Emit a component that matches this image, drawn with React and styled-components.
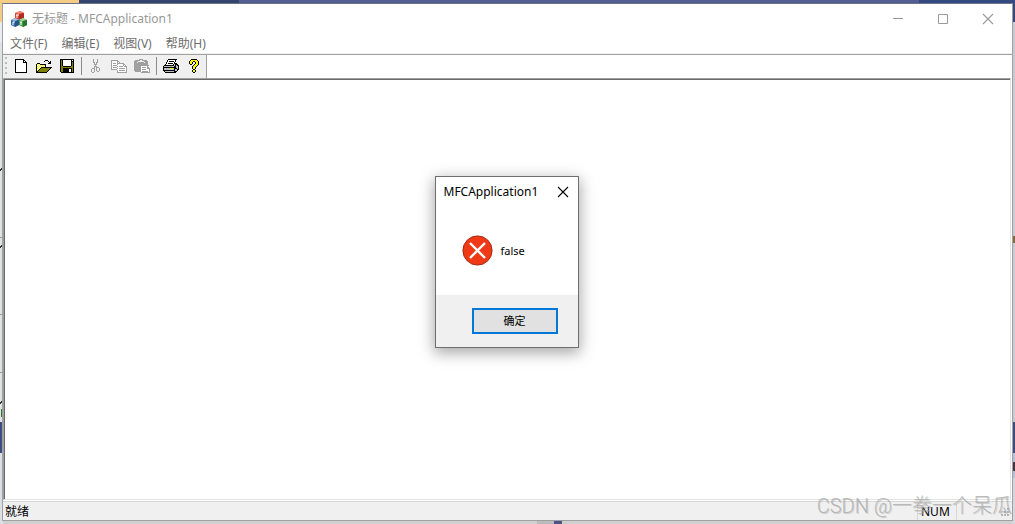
import React from 'react';
import styled, { createGlobalStyle } from 'styled-components';

const GlobalStyle = createGlobalStyle`
    * {
        box-sizing: border-box;
    }
    body {
        margin: 0;
        font-family: "Noto Sans", "Noto Sans CJK SC", sans-serif;
        font-size: 12px;
        line-height: 16px;
    }
    button {
        font: inherit;
        color: inherit;
        border: 0;
        padding: 0;
        background: none;
    }
`;

// strips of the other windows that show around the frame
const Desktop = styled.div`
    position: relative;
    display: flex;
    min-height: 100vh;
    padding: 3px 2px 3px 2px;
    background:
        linear-gradient(135deg, transparent 40%, #333 40%, #333 70%, transparent 70%) 0 167px / 3px 4px no-repeat,
        linear-gradient(135deg, transparent 40%, #333 40%, #333 70%, transparent 70%) 0 244px / 3px 4px no-repeat,
        linear-gradient(135deg, transparent 40%, #333 40%, #333 70%, transparent 70%) 0 400px / 3px 4px no-repeat,
        linear-gradient(#2f7a35, #2f7a35) 1px 409px / 2px 8px no-repeat,
        linear-gradient(#8a6a3a, #8a6a3a) 100% 236px / 2px 7px no-repeat,
        linear-gradient(#4a3340, #4a3340) 100% 462px / 2px 9px no-repeat,
        linear-gradient(#4c5587, #4c5587) 554px 100% / 8px 4px no-repeat,
        linear-gradient(#bcbcbc, #bcbcbc) 537px 100% / 17px 4px no-repeat,
        linear-gradient(90deg, #f5cc84 79px, #33456f 79px, #33456f 239px, #535f92 239px, #535f92 919px, #34497f 919px) 0 0 / 100% 4px no-repeat,
        linear-gradient(#f5cc84 22px, #e8ecf4 22px, #e8ecf4 42px, #dfe3e3 42px, #dfe3e3 237px, #9a9a9a 237px, #9a9a9a 238px, #dfe3e3 238px, #dfe3e3 314px, #9a9a9a 314px, #9a9a9a 315px, #dfe3e3 315px, #dfe3e3 372px, #9a9a9a 372px, #9a9a9a 373px, #dfe3e3 373px, #dfe3e3 422px, #3d4d84 422px, #3d4d84 453px, #dcdfe6 453px) 0 0 / 3px 100% no-repeat,
        linear-gradient(#34497f 22px, #c9c9d2 22px, #c9c9d2 422px, #3d4d84 422px, #3d4d84 453px, #b5c0dc 453px, #b5c0dc 478px, #d6d6dc 478px) 100% 0 / 3px 100% no-repeat,
        #cfcfcf;
`;

const Frame = styled.div`
    flex: 1;
    display: flex;
    flex-direction: column;
    border: 1px solid #a0a0a0;
    border-top-color: #6c7089;
    background: #fff;
`;

const TitleBar = styled.header`
    display: flex;
    align-items: center;
    height: 30px;
    padding: 0 2px 0 8px;
    color: #999;
`;

const Title = styled.h1`
    flex: 1;
    margin: 0 0 0 5px;
    font-size: 12px;
    font-weight: 400;
`;

const CaptionButton = styled.button`
    display: flex;
    align-items: center;
    justify-content: center;
    width: ${props => props.$width || 45}px;
    height: 28px;
`;

const MenuBar = styled.nav`
    display: flex;
    gap: 14px;
    height: 20px;
    padding: 2px 7px;
    border-bottom: 1px solid #f0f0f0;
    color: #6d6d6d;
`;

const MenuButton = styled.button`
    height: 16px;
    white-space: nowrap;
`;

const ToolBarRow = styled.div`
    display: flex;
    height: 24px;
    border-top: 1px solid #a0a0a0;
`;

const ToolBar = styled.div`
    display: flex;
    align-items: center;
    padding: 0 1px 1px 2px;
    background: #f0f0f0;
    border-right: 1px solid #a0a0a0;
`;

const Grip = styled.span`
    width: 2px;
    height: 18px;
    margin-right: 2px;
    background: repeating-linear-gradient(#bdbdbd 0 2px, transparent 2px 5px);
`;

const ToolButton = styled.button`
    display: flex;
    align-items: center;
    justify-content: center;
    width: 23px;
    height: 22px;
`;

const Separator = styled.span`
    width: 1px;
    height: 18px;
    margin: 0 2px 0 3px;
    background: #8c8c8c;
`;

const ClientArea = styled.main`
    flex: 1;
    display: flex;
    align-items: center;
    justify-content: center;
    margin-right: 1px;
    border: 1px solid #e3e3e3;
    border-top-color: #a0a0a0;
    border-left-color: #a0a0a0;
    box-shadow: inset 1px 1px 0 #696969;
    padding: 0 1px 54px 0;
`;

const Dialog = styled.section`
    display: flex;
    flex-direction: column;
    width: 144px;
    border: 1px solid #6e6e6e;
    background: #fff;
    box-shadow: 0 4px 14px 1px rgba(0, 0, 0, 0.35);
    color: #000;
`;

const DialogTitle = styled.header`
    display: flex;
    align-items: center;
    justify-content: space-between;
    height: 29px;
    padding-left: 8px;
    white-space: nowrap;
`;

const DialogBody = styled.div`
    display: flex;
    align-items: center;
    gap: 8px;
    height: 89px;
    padding-left: 26px;
`;

const Message = styled.p`
    margin: 0;
    font-size: 11px;
`;

const DialogFooter = styled.footer`
    display: flex;
    align-items: center;
    justify-content: flex-end;
    height: 52px;
    padding-right: 20px;
    background: #f0f0f0;
`;

const OkButton = styled.button`
    width: 86px;
    height: 26px;
    border: 2px solid #0078d7;
    background: #e1e1e1;
    font-size: 11px;
`;

const StatusBar = styled.footer`
    display: flex;
    align-items: center;
    height: 19px;
    margin-top: 1px;
    padding: 1px 2px 0;
    border-top: 1px solid #d7d7d7;
    background: #f0f0f0;
    color: #000;
`;

const StatusText = styled.span`
    flex: 1;
`;

const StatusPane = styled.span`
    width: ${props => props.$width}px;
    height: 16px;
    padding-left: 3px;
    border-left: 1px solid #d7d7d7;
`;

const Watermark = styled.span`
    position: absolute;
    right: 3px;
    bottom: 6px;
    font-family: Roboto, "Noto Sans CJK SC", sans-serif;
    font-size: 20px;
    font-weight: 300;
    line-height: 24px;
    color: rgba(170, 170, 170, 0.8);
    text-shadow: 1px 1px 0 rgba(150, 150, 150, 0.4);
    white-space: nowrap;
    pointer-events: none;
`;

const colors = {
    k: '#000000',
    o: '#808000',
    y: '#ffff00',
    w: '#ffffff',
    g: '#a0a0a0',
    s: '#c0c0c0',
};

const icons = {
    new: [
        'kkkkkkkkk...',
        'kwwwwwwwkk..',
        'kwwwwwwwkwk.',
        'kwwwwwwwkkkk',
        'kwwwwwwwwwwk',
        'kwwwwwwwwwwk',
        'kwwwwwwwwwwk',
        'kwwwwwwwwwwk',
        'kwwwwwwwwwwk',
        'kwwwwwwwwwwk',
        'kwwwwwwwwwwk',
        'kwwwwwwwwwwk',
        'kwwwwwwwwwwk',
        'kkkkkkkkkkkk',
    ],
    open: [
        '.........kkk....',
        '........k...k.k.',
        '.............kk.',
        '.kkk........kkk.',
        'kywykkkkkk......',
        'kwywywywyk......',
        'kywywywywk......',
        'kwywykkkkkkkkkkk',
        'kywykoooooooook.',
        'kwykoooooooook..',
        'kykoooooooook...',
        'kkoooooooook....',
        'kkkkkkkkkkk.....',
    ],
    save: [
        'kkkkkkkkkkkkkk',
        'kokwwwwwwwwkwk',
        'kokwwwwwwwwkkk',
        'kokwwwwwwwwkok',
        'kokwwwwwwwwkok',
        'kokwwwwwwwwkok',
        'kokwwwwwwwwkok',
        'kookkkkkkkkook',
        'kooooooooooook',
        'kookkkkkkkkkok',
        'kookkkkkkwwkok',
        'kookkkkkkwwkok',
        'kookkkkkkwwkok',
        '.kkkkkkkkkkkkk',
    ],
    cut: [
        '..g...g..',
        '..g...g..',
        '..g...g..',
        '..gg.gg..',
        '...g.g...',
        '...ggg...',
        '....g....',
        '...ggg...',
        '...g.ggg.',
        '.ggg.g..g',
        'g..g.g..g',
        'g..g.g..g',
        'g..g..gg.',
        '.gg......',
    ],
    copy: [
        'ggggggg.........',
        'gwwwwwgg........',
        'gwwwwwgwg.......',
        'gwgggwggggggg...',
        'gwwwwwgwwwwwgg..',
        'gwggggwwwwwwgwg.',
        'gwwwwwgwggggwggg',
        'gwggggwwwwwwwwwg',
        'gwwwwwgwggggggwg',
        'ggggggwwwwwwwwwg',
        '......gwggggggwg',
        '......gwwwwwwwwg',
        '......gggggggggg',
    ],
    paste: [
        '.....gggg.......',
        '.ggggg..ggggg...',
        'gggg......gggg..',
        'ggg.gggggg.ggg..',
        'gggggggggggggg..',
        'gggggggggggggg..',
        'ggggggggggggggg.',
        'gggggggwwwwwwg..',
        'gggggggwggggwgg.',
        'gggggggwwwwwwggg',
        'gggggggwggggwwwg',
        'gggggggwwwwwwwwg',
        '.ggggggwggggggwg',
        '.......ggggggggg',
    ],
    print: [
        '.....kkkkkkkkk..',
        '....kwwwwwwwk...',
        '....kwkkkkkwk...',
        '...kwwwwwwwk....',
        '...kwkkkkkwkkk..',
        '..kwwwwwwwkskkk.',
        '.kkkkkkkkkkskskk',
        'ksssssssssskkssk',
        'kkkkkkkkkkkkkssk',
        'kssssssyyyskkksk',
        'kssssssssssksskk',
        'kkkkkkkkkkkkssk.',
        '.kssssssssskkk..',
        '..kkkkkkkkkkk...',
    ],
    help: [
        '..kkkkkk..',
        '.kyyyyyyk.',
        'kyyykkyyyk',
        'kyyk..kyyk',
        'kyyk..kyyk',
        '.kk..kyyyk',
        '....kyyyk.',
        '...kyyyk..',
        '...kyyk...',
        '...kyyk...',
        '....kk....',
        '...kyyk...',
        '...kyyk...',
        '....kk....',
    ],
};

const PixelIcon = ({ name }) => {
    const rows = icons[name];
    const w = rows[0].length;
    const h = rows.length;
    return (
        <svg width={w} height={h} viewBox={`0 0 ${w} ${h}`} shapeRendering="crispEdges" aria-hidden="true">
            {rows.map((row, y) => row.split('').map((c, x) => (
                colors[c] ? <rect key={`${x}-${y}`} x={x} y={y} width="1" height="1" fill={colors[c]} /> : null
            )))}
        </svg>
    );
}

// the three coloured MFC blocks
const AppLogo = () => (
    <svg width="16" height="16" viewBox="0 0 16 16" aria-hidden="true">
        <path d="M4 2l5-2 4 2v5l-5 2-4-2z" fill="#d8402f" />
        <path d="M4 2l5-2 4 2-5 1z" fill="#f08a78" />
        <path d="M8 3l5-1v5L8 9z" fill="#b32a20" />
        <path d="M0 9l4-2 4 2v5l-4 2-4-2z" fill="#3d6fae" />
        <path d="M0 9l4-2 4 2-4 1z" fill="#9dc0e2" />
        <path d="M4 10l4-1v5l-4 2z" fill="#28548c" />
        <path d="M8 9l4-2 4 2v5l-4 2-4-2z" fill="#48a04c" />
        <path d="M8 9l4-2 4 2-4 1z" fill="#a5d8a0" />
        <path d="M12 10l4-1v5l-4 2z" fill="#26742f" />
        <path d="M6 4v3M5 4h3M2 11v3M2 11h2M10 11v3M9 11h2" stroke="#fff" strokeWidth="1" fill="none" />
    </svg>
);

const Cross = ({ color }) => (
    <svg width="12" height="12" viewBox="0 0 12 12" aria-hidden="true">
        <path d="M1 1l10 10M11 1L1 11" stroke={color} strokeWidth="1.1" fill="none" />
    </svg>
);

const ErrorIcon = () => (
    <svg width="31" height="31" viewBox="0 0 31 31" role="img" aria-label="error">
        <circle cx="15.5" cy="15.5" r="14.6" fill="#f03a17" stroke="#a52a12" strokeWidth="1" />
        <path d="M8 8l15 15M23 8l-15 15" stroke="#fff" strokeWidth="2.4" fill="none" />
    </svg>
);

const SizeGrip = () => (
    <svg width="10" height="10" viewBox="0 0 10 10" shapeRendering="crispEdges" aria-hidden="true">
        <path d="M7 1h2v2h-2zM4 4h2v2h-2zM7 4h2v2h-2zM1 7h2v2h-2zM4 7h2v2h-2zM7 7h2v2h-2z" fill="#b4b4b4" />
    </svg>
);

const menus = ['文件(F)', '编辑(E)', '视图(V)', '帮助(H)'];

const toolGroups = [
    [['new', '新建'], ['open', '打开'], ['save', '保存']],
    [['cut', '剪切'], ['copy', '复制'], ['paste', '粘贴']],
    [['print', '打印'], ['help', '关于']],
];

const App = () => {
    return (
        <Desktop>
            <GlobalStyle />
            <Frame>
                <TitleBar>
                    <AppLogo />
                    <Title>无标题 - MFCApplication1</Title>
                    <CaptionButton aria-label="最小化">
                        <svg width="10" height="10" viewBox="0 0 10 10" aria-hidden="true">
                            <path d="M0 4.5h10" stroke="#999" />
                        </svg>
                    </CaptionButton>
                    <CaptionButton aria-label="最大化">
                        <svg width="10" height="10" viewBox="0 0 10 10" aria-hidden="true">
                            <path d="M.5.5h9v9h-9z" stroke="#999" fill="none" />
                        </svg>
                    </CaptionButton>
                    <CaptionButton aria-label="关闭">
                        <Cross color="#999" />
                    </CaptionButton>
                </TitleBar>
                <MenuBar>
                    {menus.map(label => <MenuButton key={label}>{label}</MenuButton>)}
                </MenuBar>
                <ToolBarRow>
                    <ToolBar role="toolbar">
                        <Grip />
                        {toolGroups.map((group, i) => (
                            <React.Fragment key={group[0][0]}>
                                {i > 0 && <Separator />}
                                {group.map(([name, label]) => (
                                    <ToolButton key={name} aria-label={label} disabled={i === 1}>
                                        <PixelIcon name={name} />
                                    </ToolButton>
                                ))}
                            </React.Fragment>
                        ))}
                    </ToolBar>
                </ToolBarRow>
                <ClientArea>
                    <Dialog role="alertdialog" aria-label="MFCApplication1">
                        <DialogTitle>
                            MFCApplication1
                            <CaptionButton $width={30} aria-label="关闭">
                                <Cross color="#000" />
                            </CaptionButton>
                        </DialogTitle>
                        <DialogBody>
                            <ErrorIcon />
                            <Message>false</Message>
                        </DialogBody>
                        <DialogFooter>
                            <OkButton>确定</OkButton>
                        </DialogFooter>
                    </Dialog>
                </ClientArea>
                <StatusBar>
                    <StatusText>就绪</StatusText>
                    <StatusPane $width={39}>NUM</StatusPane>
                    <StatusPane $width={44} />
                    <SizeGrip />
                </StatusBar>
            </Frame>
            <Watermark>CSDN @一拳一个呆瓜</Watermark>
        </Desktop>
    );
}

export default App;
